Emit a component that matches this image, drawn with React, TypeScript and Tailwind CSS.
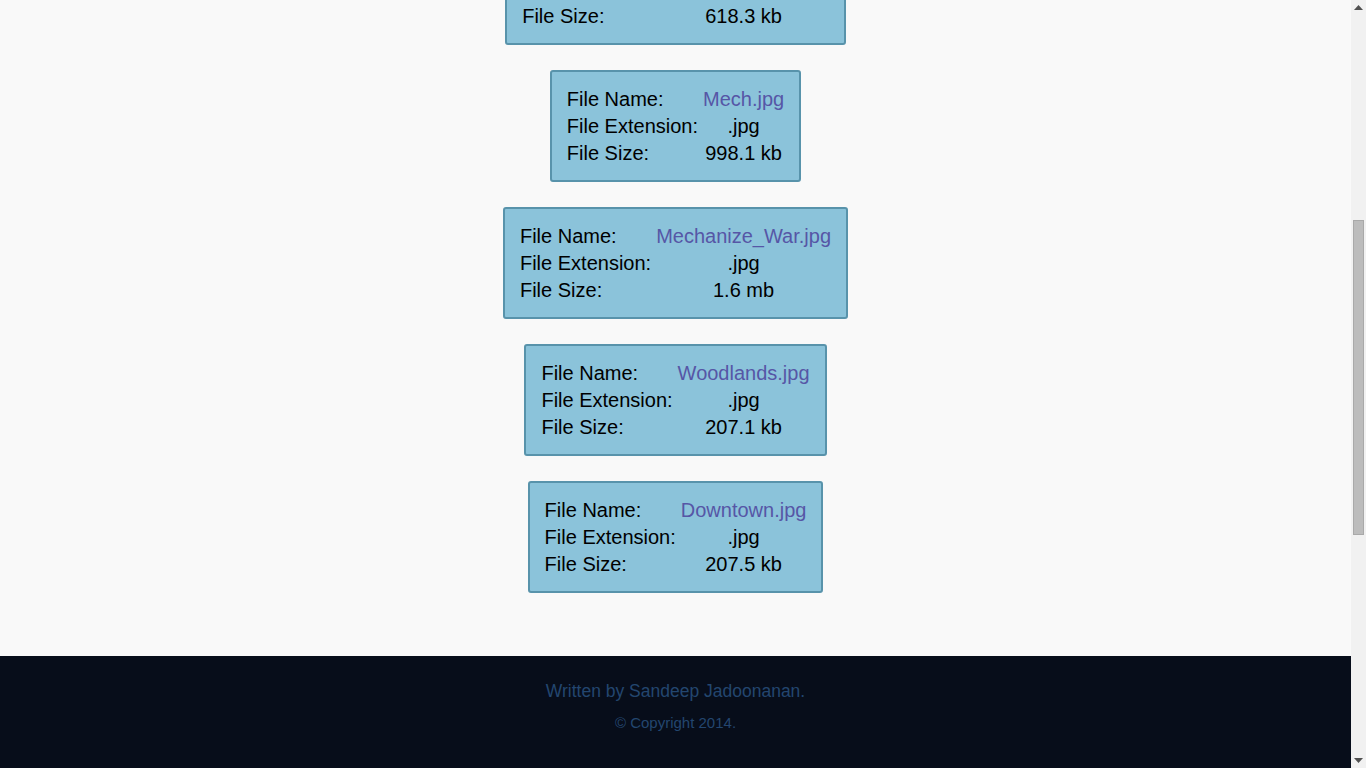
import React, { useLayoutEffect, useRef } from "react";

type FileInfo = { name: string; ext: string; size: string };

const files: FileInfo[] = [
  { name: "Skyline.jpg", ext: ".jpg", size: "412.6 kb" },
  { name: "Night_Sky.jpg", ext: ".jpg", size: "305.2 kb" },
  { name: "Mountains.jpg", ext: ".jpg", size: "1.2 mb" },
  { name: "Robots_Warrior.jpg", ext: ".jpg", size: "618.3 kb" },
  { name: "Mech.jpg", ext: ".jpg", size: "998.1 kb" },
  { name: "Mechanize_War.jpg", ext: ".jpg", size: "1.6 mb" },
  { name: "Woodlands.jpg", ext: ".jpg", size: "207.1 kb" },
  { name: "Downtown.jpg", ext: ".jpg", size: "207.5 kb" },
];

function Card({ f }: { f: FileInfo }) {
  return (
    <div className="w-fit rounded-[3px] border-2 border-[#5893ab] bg-[#8bc3da] px-[15px] pt-[14px] pb-[13px] text-[20px] leading-[27px] text-black">
      <div className="grid grid-cols-[auto_auto] gap-x-[5px]">
        <div>File Name:</div>
        <div className="text-center text-[#5656a6]">{f.name}</div>
        <div>File Extension:</div>
        <div className="text-center">{f.ext}</div>
        <div>File Size:</div>
        <div className="text-center">{f.size}</div>
      </div>
    </div>
  );
}

function FakeScrollbar() {
  return (
    <div className="flex h-screen w-[15px] shrink-0 flex-col items-center bg-[#f1f1f1]">
      <div className="flex h-[15px] w-full items-center justify-center">
        <svg width="9" height="5" viewBox="0 0 9 5">
          <polygon points="0,5 9,5 4.5,0" fill="#505050" />
        </svg>
      </div>
      <div className="mt-[205px] h-[315px] w-[11px] border border-[#a9a9a9] bg-[#bcbcbc]" />
      <div className="flex-1" />
      <div className="flex h-[15px] w-full items-center justify-center">
        <svg width="9" height="5" viewBox="0 0 9 5">
          <polygon points="0,0 9,0 4.5,5" fill="#505050" />
        </svg>
      </div>
    </div>
  );
}

export default function App() {
  const ref = useRef<HTMLDivElement>(null);
  useLayoutEffect(() => {
    if (ref.current) ref.current.scrollTop = 500;
  }, []);
  return (
    <div
      className="flex h-screen bg-[#f9f9f9]"
      style={{ fontFamily: '"Liberation Sans", Arial, sans-serif' }}
    >
      <div ref={ref} className="h-screen flex-1 overflow-y-hidden">
        <main className="flex flex-col items-center gap-[25px] pt-[22px] pb-[63px]">
          {files.map((f) => (
            <Card key={f.name} f={f} />
          ))}
        </main>
        <footer className="h-[643px] bg-[#070d1a] pt-[25px] text-center text-[#23466f]">
          <p className="text-[17.5px] leading-[20px]">Written by Sandeep Jadoonanan.</p>
          <p className="mt-[13px] text-[15px] leading-[18px]">© Copyright 2014.</p>
        </footer>
      </div>
      <FakeScrollbar />
    </div>
  );
}
